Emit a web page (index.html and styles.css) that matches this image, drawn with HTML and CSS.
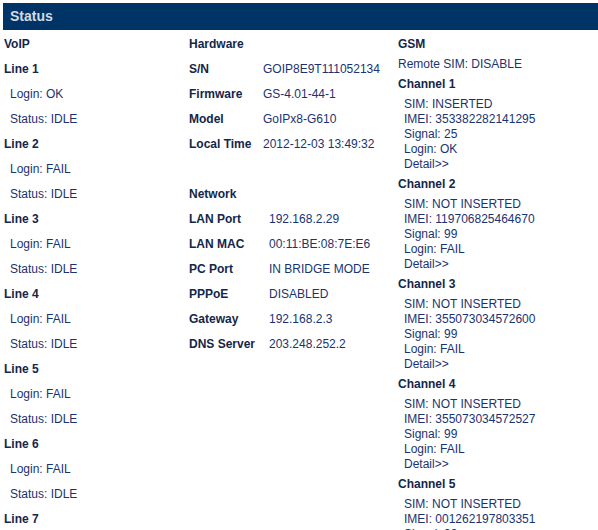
FILE: index.html
```html
<!DOCTYPE html>
<html>
<head>
<meta charset="utf-8">
<link rel="stylesheet" href="styles.css">
</head>
<body>
<div class="page">
  <div class="title-bar">Status</div>
  <div class="columns">
    <div class="col col-voip">
      <div class="row head">VoIP</div>
      <div class="row head">Line 1</div>
      <div class="row item">Login: OK</div>
      <div class="row item">Status: IDLE</div>
      <div class="row head">Line 2</div>
      <div class="row item">Login: FAIL</div>
      <div class="row item">Status: IDLE</div>
      <div class="row head">Line 3</div>
      <div class="row item">Login: FAIL</div>
      <div class="row item">Status: IDLE</div>
      <div class="row head">Line 4</div>
      <div class="row item">Login: FAIL</div>
      <div class="row item">Status: IDLE</div>
      <div class="row head">Line 5</div>
      <div class="row item">Login: FAIL</div>
      <div class="row item">Status: IDLE</div>
      <div class="row head">Line 6</div>
      <div class="row item">Login: FAIL</div>
      <div class="row item">Status: IDLE</div>
      <div class="row head">Line 7</div>
    </div>
    <div class="col col-info">
      <div class="row head">Hardware</div>
      <div class="kv hw">
        <div class="row head">S/N</div><div class="row val">GOIP8E9T111052134</div>
        <div class="row head">Firmware</div><div class="row val">GS-4.01-44-1</div>
        <div class="row head">Model</div><div class="row val">GoIPx8-G610</div>
        <div class="row head">Local Time</div><div class="row val">2012-12-03 13:49:32</div>
      </div>
      <div class="row"></div>
      <div class="row head">Network</div>
      <div class="kv net">
        <div class="row head">LAN Port</div><div class="row val">192.168.2.29</div>
        <div class="row head">LAN MAC</div><div class="row val">00:11:BE:08:7E:E6</div>
        <div class="row head">PC Port</div><div class="row val">IN BRIDGE MODE</div>
        <div class="row head">PPPoE</div><div class="row val">DISABLED</div>
        <div class="row head">Gateway</div><div class="row val">192.168.2.3</div>
        <div class="row head">DNS Server</div><div class="row val">203.248.252.2</div>
      </div>
    </div>
    <div class="col col-gsm">
      <div class="grow head">GSM</div>
      <div class="grow val">Remote SIM: DISABLE</div>
      <div class="channel">
        <div class="grow head">Channel 1</div>
        <div class="chlist">
          <div>SIM: INSERTED</div>
          <div>IMEI: 353382282141295</div>
          <div>Signal: 25</div>
          <div>Login: OK</div>
          <div>Detail&gt;&gt;</div>
        </div>
      </div>
      <div class="channel">
        <div class="grow head">Channel 2</div>
        <div class="chlist">
          <div>SIM: NOT INSERTED</div>
          <div>IMEI: 119706825464670</div>
          <div>Signal: 99</div>
          <div>Login: FAIL</div>
          <div>Detail&gt;&gt;</div>
        </div>
      </div>
      <div class="channel">
        <div class="grow head">Channel 3</div>
        <div class="chlist">
          <div>SIM: NOT INSERTED</div>
          <div>IMEI: 355073034572600</div>
          <div>Signal: 99</div>
          <div>Login: FAIL</div>
          <div>Detail&gt;&gt;</div>
        </div>
      </div>
      <div class="channel">
        <div class="grow head">Channel 4</div>
        <div class="chlist">
          <div>SIM: NOT INSERTED</div>
          <div>IMEI: 355073034572527</div>
          <div>Signal: 99</div>
          <div>Login: FAIL</div>
          <div>Detail&gt;&gt;</div>
        </div>
      </div>
      <div class="channel">
        <div class="grow head">Channel 5</div>
        <div class="chlist">
          <div>SIM: NOT INSERTED</div>
          <div>IMEI: 001262197803351</div>
          <div>Signal: 99</div>
          <div>Login: FAIL</div>
          <div>Detail&gt;&gt;</div>
        </div>
      </div>
    </div>
  </div>
</div>
</body>
</html>
```
FILE: styles.css
```css
html, body {
  margin: 0;
  padding: 0;
  background: #ffffff;
  overflow: hidden;
}
body {
  font-family: "Liberation Sans", Arial, sans-serif;
  font-size: 12px;
  color: #1a3370;
}
.page {
  padding: 3px 0 0 3px;
  height: 527px;
  overflow: hidden;
}
.title-bar {
  height: 27px;
  line-height: 27px;
  background: #003366;
  color: #d2dae2;
  font-weight: bold;
  font-size: 14px;
  padding-left: 7px;
}
.columns {
  display: flex;
  padding-top: 2px;
}
.col-voip {
  width: 185px;
  padding-left: 1px;
}
.col-info {
  width: 209px;
}
.col-gsm {
  flex: 1;
  padding-top: 2px;
}
.row {
  height: 25px;
  line-height: 25px;
  white-space: nowrap;
}
.head {
  font-weight: bold;
  color: #14264a;
}
.item {
  padding-left: 6px;
}
.kv {
  display: grid;
}
.kv.hw {
  grid-template-columns: 74px auto;
}
.kv.net {
  grid-template-columns: 80px auto;
}
.grow {
  height: 20px;
  line-height: 20px;
  white-space: nowrap;
}
.chlist {
  padding: 3px 0 2px 6px;
  line-height: 15px;
}
.chlist div {
  height: 15px;
  white-space: nowrap;
}
```
